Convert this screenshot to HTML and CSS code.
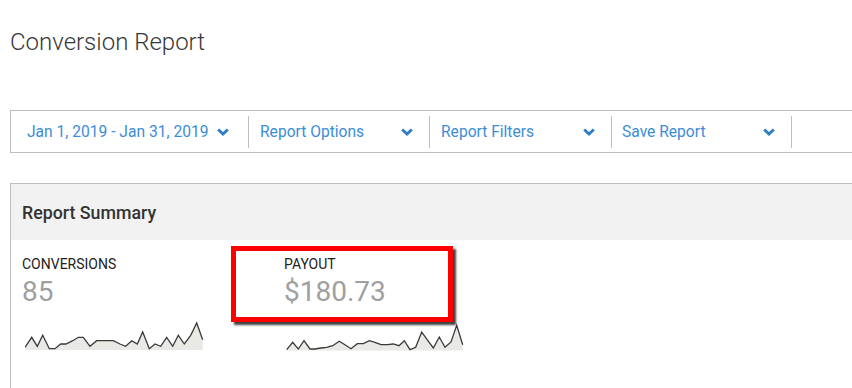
FILE: index.html
```html
<!DOCTYPE html>
<html>
<head>
<title>Conversion Report</title>
<link rel="stylesheet" href="styles.css">
</head>
<body>

<div class="page">
  <h1 class="page-title">Conversion Report</h1>

  <div class="toolbar">
    <div class="tool tool-date">
      <span>Jan 1, 2019 - Jan 31, 2019</span>
      <svg class="chevron" viewBox="0 0 12 8"><polyline points="1.2,1.5 6,6 10.8,1.5"/></svg>
    </div>
    <div class="tool tool-options">
      <span>Report Options</span>
      <svg class="chevron" viewBox="0 0 12 8"><polyline points="1.2,1.5 6,6 10.8,1.5"/></svg>
    </div>
    <div class="tool tool-filters">
      <span>Report Filters</span>
      <svg class="chevron" viewBox="0 0 12 8"><polyline points="1.2,1.5 6,6 10.8,1.5"/></svg>
    </div>
    <div class="tool tool-save">
      <span>Save Report</span>
      <svg class="chevron" viewBox="0 0 12 8"><polyline points="1.2,1.5 6,6 10.8,1.5"/></svg>
    </div>
  </div>

  <div class="panel">
    <div class="panel-header">Report Summary</div>
    <div class="panel-body">
      <div class="metric">
        <div class="metric-label">CONVERSIONS</div>
        <div class="metric-value">85</div>
        <svg class="spark" viewBox="0 0 180 31" width="180" height="31">
          <polygon class="spark-fill" points="0,30 0,27.3 6.7,17.3 12.3,26.3 17.7,15.3 24.3,28.7 30,28.7 35.7,24 41,24 47.7,20.7 53.3,17.3 58.3,17.3 65,26.3 71.7,20.7 78.3,20.7 88.3,20.7 95,24 100.7,26.3 106.7,20.7 112.3,24 117.7,12 124.3,28.7 130,24 135.7,26.3 141.7,17.3 147.7,26.3 153.3,15.3 159.3,24 165.7,15.3 171.7,3 177.7,19.7 177.7,30"/>
          <polyline class="spark-line" points="0,27.3 6.7,17.3 12.3,26.3 17.7,15.3 24.3,28.7 30,28.7 35.7,24 41,24 47.7,20.7 53.3,17.3 58.3,17.3 65,26.3 71.7,20.7 78.3,20.7 88.3,20.7 95,24 100.7,26.3 106.7,20.7 112.3,24 117.7,12 124.3,28.7 130,24 135.7,26.3 141.7,17.3 147.7,26.3 153.3,15.3 159.3,24 165.7,15.3 171.7,3 177.7,19.7"/>
        </svg>
      </div>
      <div class="metric">
        <div class="metric-label">PAYOUT</div>
        <div class="metric-value">$180.73</div>
        <svg class="spark spark-payout" viewBox="0 0 180 31" width="180" height="31">
          <polygon class="spark-fill" points="0.7,30.5 0.7,29.7 6.7,22.3 12.3,29 18,20.7 24,29 29,29 34.7,28 40.7,27.3 46.7,25.7 53.3,21.3 59.7,25.3 65,28.7 71.3,23.7 77.3,23.7 83.3,20.7 89,22.3 95,24.7 101.3,24.7 107.3,24 113,25.7 118.3,20.7 124,29.7 129.7,27.3 135.7,12 141.7,20.3 147.3,28 153.3,17 159,27.3 165,22 170.7,5.3 176.7,24.7 176.7,30.5"/>
          <polyline class="spark-line" points="0.7,29.7 6.7,22.3 12.3,29 18,20.7 24,29 29,29 34.7,28 40.7,27.3 46.7,25.7 53.3,21.3 59.7,25.3 65,28.7 71.3,23.7 77.3,23.7 83.3,20.7 89,22.3 95,24.7 101.3,24.7 107.3,24 113,25.7 118.3,20.7 124,29.7 129.7,27.3 135.7,12 141.7,20.3 147.3,28 153.3,17 159,27.3 165,22 170.7,5.3 176.7,24.7"/>
        </svg>
      </div>
      <div class="highlight"></div>
    </div>
  </div>
</div>

</body>
</html>
```

FILE: styles.css
```css
body {
  margin: 0;
  font-family: Roboto, 'Liberation Sans', sans-serif;
  background-color: #ffffff;
  color: #333;
  overflow: hidden;
}

.page {
  width: 950px;
  padding: 28px 0 0 10px;
}

.page-title {
  margin: 0;
  font-size: 24px;
  line-height: 28px;
  font-weight: 300;
  color: #383838;
}

/* Toolbar */
.toolbar {
  display: flex;
  align-items: center;
  height: 41px;
  margin-top: 54px;
  border: 1px solid #bdbdbd;
}

.tool {
  display: flex;
  align-items: center;
  justify-content: space-between;
  box-sizing: border-box;
  height: 32px;
  padding: 0 16px 0 11px;
  border-right: 1px solid #bdbdbd;
  font-size: 15.6px;
  color: #3c8dd8;
}

.tool-date {
  width: 238px;
  padding-left: 16px;
  padding-right: 19px;
}

.tool-options { width: 181px; }
.tool-filters { width: 182px; }
.tool-save { width: 180px; padding-left: 10px; }

.chevron {
  width: 12px;
  height: 8px;
  fill: none;
  stroke: #2c7cc6;
  stroke-width: 2.8;
}

/* Summary panel */
.panel {
  margin-top: 30px;
  border: 1px solid #bdbdbd;
}

.panel-header {
  display: flex;
  align-items: center;
  height: 56px;
  padding-left: 11px;
  background-color: #f2f2f2;
  font-size: 17.8px;
  font-weight: 500;
  color: #333;
}

.panel-body {
  position: relative;
  display: flex;
  min-height: 160px;
  padding: 16px 0 0 11px;
}

.metric {
  width: 262px;
}

.metric-label {
  font-size: 14px;
  line-height: 16px;
  color: #222;
}

.metric-value {
  margin-top: 3px;
  font-size: 28px;
  line-height: 33px;
  color: #a0a0a0;
}

.spark {
  display: block;
  margin: 12px 0 0 3px;
}

.spark-payout {
  margin-left: 2px;
}

.spark-fill {
  fill: #e9e9e6;
}

.spark-line {
  fill: none;
  stroke: #3a3a3a;
  stroke-width: 1.3;
  stroke-linejoin: miter;
}

/* Annotation box drawn over the payout metric */
.highlight {
  position: absolute;
  left: 220px;
  top: 6px;
  width: 212px;
  height: 66px;
  border: 5px solid #ff0000;
  box-shadow: 3px 3px 2px rgba(0, 0, 0, 0.75);
}
```
